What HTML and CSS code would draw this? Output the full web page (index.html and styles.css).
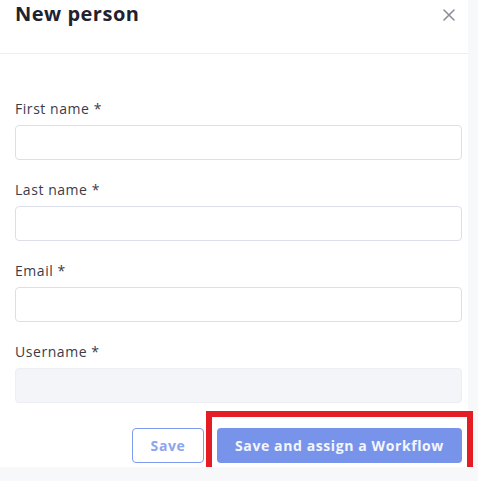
FILE: index.html
```html
<!DOCTYPE html>
<html>
<head>
<meta charset="utf-8">
<link rel="stylesheet" href="styles.css">
</head>
<body>
<div class="panel">
  <div class="header">
    <h1 class="title">New person</h1>
    <button class="close" aria-label="Close">
      <svg width="12" height="12" viewBox="0 0 12 12"><path d="M1 1L11 11M11 1L1 11" stroke="#8a8f99" stroke-width="1.6" stroke-linecap="round"/></svg>
    </button>
  </div>
  <form class="form">
    <div class="field">
      <label class="label">First name *</label>
      <input class="input" type="text">
    </div>
    <div class="field">
      <label class="label">Last name *</label>
      <input class="input" type="text">
    </div>
    <div class="field">
      <label class="label">Email *</label>
      <input class="input" type="text">
    </div>
    <div class="field">
      <label class="label">Username *</label>
      <input class="input input-disabled" type="text" disabled>
    </div>
    <div class="actions">
      <button type="button" class="btn btn-outline">Save</button>
      <div class="highlight">
        <button type="button" class="btn btn-primary">Save and assign a Workflow</button>
      </div>
    </div>
  </form>
</div>
</body>
</html>
```

FILE: styles.css
```css
html, body {
  margin: 0;
  padding: 0;
  background: #f7f8fa;
  font-family: "Open Sans", "Noto Sans", sans-serif;
  color: #2b2d3a;
}
.panel {
  width: 468px;
  background: #ffffff;
  padding-bottom: 4px;
}
.header {
  display: flex;
  justify-content: space-between;
  align-items: flex-start;
  height: 53px;
  padding: 0 13px 0 15px;
  border-bottom: 1px solid #eceef2;
}
.title {
  margin: 0;
  line-height: 28px;
  font-size: 20px;
  font-weight: 700;
  color: #1f2230;
  letter-spacing: 0.5px;
}
.close {
  margin-top: 9px;
  background: none;
  border: 0;
  padding: 0;
  width: 12px;
  height: 12px;
  display: flex;
}
.form {
  padding: 46px 6px 0 15px;
  display: flex;
  flex-direction: column;
}
.field {
  display: flex;
  flex-direction: column;
  margin-bottom: 21px;
}
.label {
  font-size: 14px;
  line-height: 18px;
  letter-spacing: 0.55px;
  color: #3a3b4a;
  margin-bottom: 7px;
}
.input {
  box-sizing: border-box;
  height: 35px;
  width: 447px;
  border: 1px solid #dcdfe9;
  border-radius: 4px;
  background: #fff;
  margin: 0;
}
.input-disabled {
  background: #f4f5f8;
  border-color: #eceef2;
}
.actions {
  display: flex;
  justify-content: flex-end;
  align-items: flex-start;
  gap: 2px;
  margin-top: 4px;
  margin-right: -11px;
}
.btn {
  font-family: "Open Sans", "Noto Sans", sans-serif;
  font-weight: 700;
  font-size: 14px;
  letter-spacing: 0.6px;
  height: 35px;
  border-radius: 4px;
  box-sizing: border-box;
  padding: 0;
  display: block;
}
.btn-outline {
  width: 72px;
  background: #fff;
  border: 1px solid #7f9bf0;
  color: #8ea4ee;
}
.highlight {
  margin: -17px 0 -14px;
  padding: 11px 5px 8px;
  border: 6px solid #e31d23;
}
.btn-primary {
  width: 245px;
  background: #7894ea;
  border: 0;
  color: #f4f6ff;
}
```
